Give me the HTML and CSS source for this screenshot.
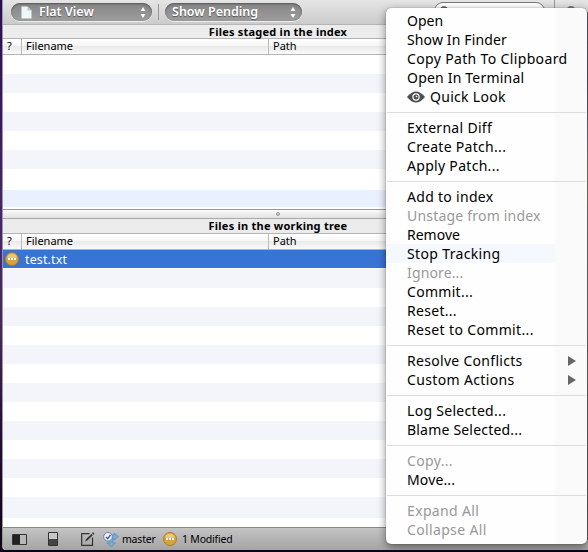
FILE: index.html
```html
<!DOCTYPE html>
<html lang="en"><head><meta charset="utf-8"><title>Working copy</title><link rel="stylesheet" href="styles.css"></head>
<body>
<div class="window">
<header class="toolbar">
 <div class="pill flat"><svg class="doc" width="11" height="13" viewBox="0 0 11 13"><path d="M.5.5h6l4 4v8H.5z" fill="#edf8f7"/><path d="M6.5.5l4 4h-4z" fill="#b1cbc9"/></svg><span class="t-flat">Flat View</span><svg class="arrows" width="6" height="11" viewBox="0 0 6 11"><path d="M3 0l2.5 4H.5zM3 11L.5 7h5z" fill="#fff"/></svg></div>
 <i class="split"></i>
 <div class="pill pending"><span class="t-pending">Show Pending</span><svg class="arrows" width="6" height="11" viewBox="0 0 6 11"><path d="M3 0l2.5 4H.5zM3 11L.5 7h5z" fill="#fff"/></svg></div>
 <div class="search"><svg width="10" height="10" viewBox="0 0 10 10"><circle cx="4" cy="4" r="3" fill="none" stroke="#555" stroke-width="1.5"/></svg></div>
 <i class="split end"></i><b class="knob"></b>
</header>
<section class="pane top">
 <h2><span class="t-staged">Files staged in the index</span></h2>
 <div class="columns"><span class="q">?</span><span class="name">Filename</span><span class="path">Path</span></div>
 <div class="rows"><div></div><div></div><div></div><div></div><div></div><div></div><div class="tall"></div><div class="drop"></div></div>
</section>
<div class="divider"><i></i></div>
<section class="pane bottom">
 <h2><span class="t-tree">Files in the working tree</span></h2>
 <div class="columns"><span class="q">?</span><span class="name">Filename</span><span class="path">Path</span></div>
 <div class="rows"><div class="selected"><svg class="modified" width="14" height="14" viewBox="0 0 14 14"><circle cx="7" cy="7" r="6.5" fill="#d9a236" stroke="#b17c22"/><path d="M2 5.5a5.2 5.2 0 0 1 10 0q-5 1.5-10 0z" fill="#edc878"/><path d="M3 6h2v2H3zM6 6h2v2H6zM9 6h2v2H9z" fill="#fff"/></svg><span class="t-file">test.txt</span></div><div></div><div></div><div></div><div></div><div></div><div></div><div></div><div></div><div></div><div></div><div></div><div></div><div class="tall"></div></div>
</section>
<footer>
 <svg class="f1" width="15" height="11" viewBox="0 0 15 11"><path d="M.5.5h14v10H.5z" fill="#b8b8b8" stroke="#333"/><path d="M1 1h7v9H1z" fill="#222"/></svg>
 <svg class="f2" width="10" height="14" viewBox="0 0 10 14"><path d="M.5.5h9v13h-9z" fill="#c8c8c8" stroke="#333"/><path d="M1 7h8v6H1z" fill="#444"/></svg>
 <svg class="f3" width="14" height="14" viewBox="0 0 14 14"><path d="M8.5 1.6H.7v11.7h10.8V5.5" fill="none" stroke="#333" stroke-width="1.2"/><path d="M4 9.5l1.2-2.6L10.500 2l1.300 1.300L6.500 8.300zM11 1.300l1-1 1.500 1.500-1 1z" fill="#333"/></svg>
 <svg class="f4" width="16" height="15" viewBox="0 0 16 15"><path d="M8 3h3V1l4.500 3.500L11 8V6H8zM7 7h3v4h2.500l-4 3.700L4 11h3z" fill="#6cb1e0" stroke="#3f7eaf" stroke-width=".5"/><circle cx="5" cy="4.800" r="4.300" fill="#f1f3ff" stroke="#6a7cc0"/><path d="M3 5l1.700 1.700L7.500 3" fill="none" stroke="#4056a5" stroke-width="1.300"/></svg>
 <span class="t-master">master</span><svg class="modified" width="14" height="14" viewBox="0 0 14 14"><circle cx="7" cy="7" r="6.5" fill="#d9a236" stroke="#b17c22"/><path d="M2 5.5a5.2 5.2 0 0 1 10 0q-5 1.5-10 0z" fill="#edc878"/><path d="M3 6h2v2H3zM6 6h2v2H6zM9 6h2v2H9z" fill="#fff"/></svg><span class="t-mod">1 Modified</span>
</footer>
</div>
<div class="edge"></div>
<nav class="menu">
 <div><span class="m1">Open</span></div><div><span class="m2">Show In Finder</span></div><div><span class="m3">Copy Path To Clipboard</span></div><div><span class="m4">Open In Terminal</span></div>
 <div><svg class="eye" width="18" height="12" viewBox="0 0 18 12"><path d="M0 6Q9-5 18 6Q9 17 0 6z" fill="#505050"/><circle cx="9" cy="6" r="3.7" fill="#fff"/><circle cx="9" cy="6" r="2.5" fill="#505050"/><circle cx="9.5" cy="5.5" r=".8" fill="#fff"/></svg><span class="m5">Quick Look</span></div>
 <hr><div><span class="m6">External Diff</span></div><div><span class="m7">Create Patch...</span></div><div><span class="m8">Apply Patch...</span></div>
 <hr><div><span class="m9">Add to index</span></div><div class="off"><span class="m10">Unstage from index</span></div><div><span class="m11">Remove</span></div><div class="tint"><span class="m12">Stop Tracking</span></div><div class="off"><span class="m13">Ignore...</span></div><div><span class="m14">Commit...</span></div><div><span class="m15">Reset...</span></div><div><span class="m16">Reset to Commit...</span></div>
 <hr><div class="sub"><span class="m17">Resolve Conflicts</span></div><div class="sub"><span class="m18">Custom Actions</span></div>
 <hr><div><span class="m19">Log Selected...</span></div><div><span class="m20">Blame Selected...</span></div>
 <hr><div class="off"><span class="m21">Copy...</span></div><div><span class="m22">Move...</span></div>
 <hr><div class="off"><span class="m23">Expand All</span></div><div class="off"><span class="m24">Collapse All</span></div>
</nav>
</body></html>
```
FILE: styles.css
```css
*{box-sizing:border-box}
body{margin:0;width:588px;height:552px;overflow:hidden;font-family:"Noto Sans","Open Sans",sans-serif;position:relative;color:#000;background:linear-gradient(#2b0b5b,#4b2470 40%,#4a2560 60%,#2b0e40 75%,#0c0316)}
.window{margin-left:2px;height:550px;display:flex;flex-direction:column;background:#fff;border-left:1px solid #999;border-radius:0 0 0 4px;overflow:hidden}
.toolbar{height:25px;flex:none;display:flex;align-items:flex-start;background:linear-gradient(#e5e5e5,#cbcbcb);border-bottom:1px solid #b4b4b4}
.pill{height:18px;margin-top:3px;border-radius:9px;background:linear-gradient(#858585,#9d9d9d);box-shadow:inset 0 1px 2px #555,0 1px 0 #eee;color:#fff;font-weight:600;font-size:12.5px;line-height:17px;display:flex;align-items:center;text-shadow:0 1px 1px #555}
.pill span{position:relative;top:-1px}
.flat{width:141px;margin-left:8px;padding-left:10px}.doc{margin-right:7px}.arrows{margin-left:auto;margin-right:6px}
.split{width:1px;height:16px;margin:4px 6px 0;background:#999}
.pending{width:137px;padding-left:7px}
.search{width:111px;height:18px;margin:2px 0 0 132px;border:1px solid #777;border-radius:9px;background:#fff;padding:3px 5px;line-height:0}
.end{margin:0 12px 0 9px;height:24px}.knob{width:8px;height:8px;border-radius:4px;background:#777;margin-top:6px}
.pane{flex:none}
h2{margin:0;font-size:11px;letter-spacing:.23px;line-height:13px;height:13px;background:#ececec;text-align:center;font-weight:700;width:550px}
.columns{height:17px;border-top:1px solid #b4b4b4;border-bottom:1px solid #b4b4b4;background:linear-gradient(#fff 0,#f6f6f6 45%,#e9e9e9 46%,#fafafa);display:flex;font-size:11px;line-height:15px}
.columns span{line-height:14px}
.q{width:19px;padding-left:4px;border-right:1px solid #bbb}.name{width:247px;padding-left:4px;border-right:1px solid #bbb}.path{padding-left:4px}
.rows div{height:19px}.rows div:nth-child(even){background:#f3f5fa}
.rows .tall,.rows .tall:nth-child(even){height:21px}
.top{height:184px}.top .drop.drop{background:#eaf1fe;height:17px}
.divider{height:10px;flex:none;border-top:1px solid #999;border-bottom:1px solid #aaa;background:linear-gradient(#fafafa,#e2e2e2);width:550px;display:flex;align-items:center;justify-content:center}
.divider i{width:4px;height:4px;border:1px solid #999;border-radius:50%;background:#ccc}
.bottom{flex:1;overflow:hidden}.bottom h2{height:14px;line-height:14px}
.rows .selected{background:#3874d6;border-bottom:1px solid #fff;color:#fff;display:flex;align-items:center;padding-left:2px;font-size:12.5px;letter-spacing:.12px}
.modified{flex:none}
.t-file{margin-left:6px}
footer{height:23px;flex:none;border-top:1px solid #888;background:linear-gradient(#c4c4c4,#a4a4a4);display:flex;align-items:center;font-size:10.5px;letter-spacing:-.2px}
.f1{margin-left:9px}.f2{margin-left:21px}.f3{margin-left:23px}.f4{margin-left:8px}.t-master{margin-left:3px;width:34px}footer .modified{margin-left:7px}.t-mod{margin-left:5px}
.edge{position:absolute;right:0;top:12px;width:2px;height:528px;background:linear-gradient(#667 0,#557 12%,#8a8a82 30%,#777 42%,#666)}
.menu{position:absolute;left:386px;top:8px;width:201px;height:536px;border-radius:5px;background:linear-gradient(90deg,#fff0 167px,#fafafa 171px),#fefefe;box-shadow:0 3px 9px #0007,0 0 1px #0009;padding-top:3px;font-size:14px;line-height:19px;letter-spacing:.3px}
.menu div{height:19px;padding-left:21px;display:flex;align-items:center;white-space:nowrap}
.menu hr{height:1px;border:0;background:#ddd;margin:6px 1px 5px}
.menu .off{color:#999}.eye{margin-right:5px}
.menu .tint{background:linear-gradient(90deg,#f5f8fe 167px,#fff0 171px)}
.m1,.m11{letter-spacing:0}.m2,.m13,.m22{letter-spacing:.14px}.m4,.m10,.m20{letter-spacing:.2px}
.m3,.m12,.m16,.m18,.m21,.m23,.m24{letter-spacing:.35px}
.sub::after{content:"";margin-left:auto;margin-right:11px;border-left:8px solid #666;border-top:5px solid transparent;border-bottom:5px solid transparent}
```
